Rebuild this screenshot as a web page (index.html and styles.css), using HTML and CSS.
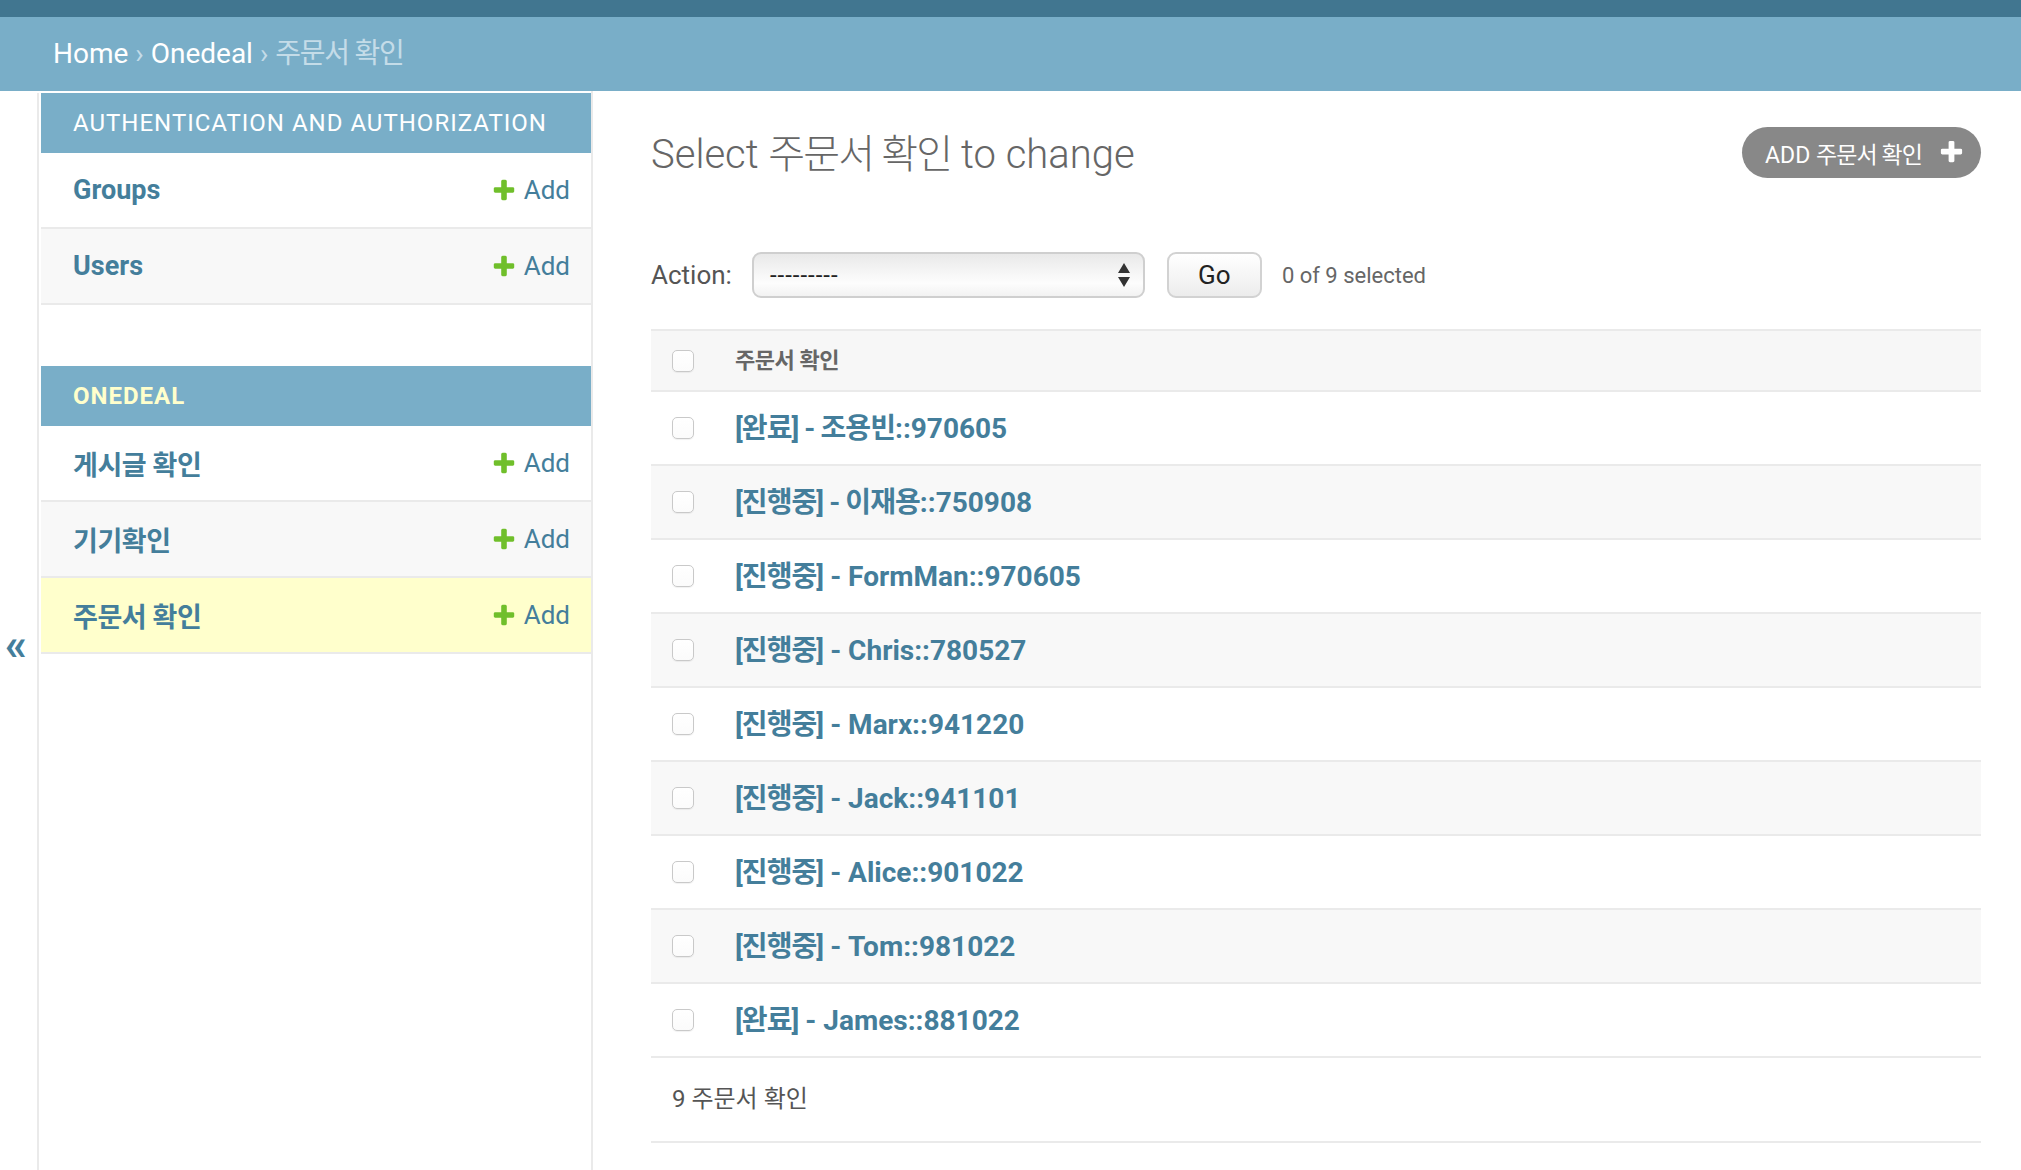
FILE: index.html
```html
<!DOCTYPE html>
<html lang="ko">
<head>
<meta charset="utf-8">
<title>Select 주문서 확인 to change</title>
<link rel="stylesheet" href="styles.css">
</head>
<body>
<div class="topbar"></div>
<nav class="breadcrumbs"><a href="#">Home</a> › <a href="#">Onedeal</a> › <span class="ko">주문서 확인</span></nav>
<div class="main">
  <div class="toggle"><span>«</span></div>
  <aside class="sidebar">
    <div class="module">
      <div class="caption">Authentication and Authorization</div>
      <div class="srow"><a class="model" href="#">Groups</a><a class="addlink" href="#"><svg viewBox="0 0 1792 1792" width="26" height="26"><path fill="#70bf2b" d="M1600 796v192q0 40-28 68t-68 28h-416v416q0 40-28 68t-68 28h-192q-40 0-68-28t-28-68v-416h-416q-40 0-68-28t-28-68v-192q0-40 28-68t68-28h416v-416q0-40 28-68t68-28h192q40 0 68 28t28 68v416h416q40 0 68 28t28 68z"/></svg>Add</a></div>
      <div class="srow alt"><a class="model" href="#">Users</a><a class="addlink" href="#"><svg viewBox="0 0 1792 1792" width="26" height="26"><path fill="#70bf2b" d="M1600 796v192q0 40-28 68t-68 28h-416v416q0 40-28 68t-68 28h-192q-40 0-68-28t-28-68v-416h-416q-40 0-68-28t-28-68v-192q0-40 28-68t68-28h416v-416q0-40 28-68t68-28h192q40 0 68 28t28 68v416h416q40 0 68 28t28 68z"/></svg>Add</a></div>
    </div>
    <div class="module">
      <div class="caption current">Onedeal</div>
      <div class="srow"><a class="model ko" href="#">게시글 확인</a><a class="addlink" href="#"><svg viewBox="0 0 1792 1792" width="26" height="26"><path fill="#70bf2b" d="M1600 796v192q0 40-28 68t-68 28h-416v416q0 40-28 68t-68 28h-192q-40 0-68-28t-28-68v-416h-416q-40 0-68-28t-28-68v-192q0-40 28-68t68-28h416v-416q0-40 28-68t68-28h192q40 0 68 28t28 68v416h416q40 0 68 28t28 68z"/></svg>Add</a></div>
      <div class="srow alt"><a class="model ko" href="#">기기확인</a><a class="addlink" href="#"><svg viewBox="0 0 1792 1792" width="26" height="26"><path fill="#70bf2b" d="M1600 796v192q0 40-28 68t-68 28h-416v416q0 40-28 68t-68 28h-192q-40 0-68-28t-28-68v-416h-416q-40 0-68-28t-28-68v-192q0-40 28-68t68-28h416v-416q0-40 28-68t68-28h192q40 0 68 28t28 68v416h416q40 0 68 28t28 68z"/></svg>Add</a></div>
      <div class="srow selected"><a class="model ko" href="#">주문서 확인</a><a class="addlink" href="#"><svg viewBox="0 0 1792 1792" width="26" height="26"><path fill="#70bf2b" d="M1600 796v192q0 40-28 68t-68 28h-416v416q0 40-28 68t-68 28h-192q-40 0-68-28t-28-68v-416h-416q-40 0-68-28t-28-68v-192q0-40 28-68t68-28h416v-416q0-40 28-68t68-28h192q40 0 68 28t28 68v416h416q40 0 68 28t28 68z"/></svg>Add</a></div>
    </div>
  </aside>
  <div class="content">
    <div class="titlebar">
      <h1>Select <span class="ko">주문서 확인</span> to change</h1>
      <a class="addbtn" href="#"><span class="btntext">Add <span class="ko">주문서 확인</span></span><svg viewBox="0 0 1792 1792" width="27" height="27"><path fill="#fff" d="M1600 736v192q0 40-28 68t-68 28h-416v416q0 40-28 68t-68 28h-192q-40 0-68-28t-28-68v-416h-416q-40 0-68-28t-28-68v-192q0-40 28-68t68-28h416v-416q0-40 28-68t68-28h192q40 0 68 28t28 68v416h416q40 0 68 28t28 68z"/></svg></a>
    </div>
    <div class="actions">
      <span class="label">Action:</span>
      <div class="select"><span>---------</span><svg width="14" height="26" viewBox="0 0 14 26"><path d="M7 1 L13 11 L1 11 Z M1 15 L13 15 L7 25 Z" fill="#333"/></svg></div>
      <button class="go">Go</button>
      <span class="counter">0 of 9 selected</span>
    </div>
    <table class="results">
      <thead><tr><th class="cb"><span class="box"></span></th><th class="name"><span class="ko">주문서 확인</span></th></tr></thead>
      <tbody>
        <tr><td class="cb"><span class="box"></span></td><td class="name"><a href="#"><span class="ko">[완료] - 조용빈</span>::970605</a></td></tr>
        <tr class="alt"><td class="cb"><span class="box"></span></td><td class="name"><a href="#"><span class="ko">[진행중] - 이재용</span>::750908</a></td></tr>
        <tr><td class="cb"><span class="box"></span></td><td class="name"><a href="#"><span class="ko">[진행중]</span> - FormMan::970605</a></td></tr>
        <tr class="alt"><td class="cb"><span class="box"></span></td><td class="name"><a href="#"><span class="ko">[진행중]</span> - Chris::780527</a></td></tr>
        <tr><td class="cb"><span class="box"></span></td><td class="name"><a href="#"><span class="ko">[진행중]</span> - Marx::941220</a></td></tr>
        <tr class="alt"><td class="cb"><span class="box"></span></td><td class="name"><a href="#"><span class="ko">[진행중]</span> - Jack::941101</a></td></tr>
        <tr><td class="cb"><span class="box"></span></td><td class="name"><a href="#"><span class="ko">[진행중]</span> - Alice::901022</a></td></tr>
        <tr class="alt"><td class="cb"><span class="box"></span></td><td class="name"><a href="#"><span class="ko">[진행중]</span> - Tom::981022</a></td></tr>
        <tr><td class="cb"><span class="box"></span></td><td class="name"><a href="#"><span class="ko">[완료]</span> - James::881022</a></td></tr>
      </tbody>
    </table>
    <p class="paginator">9 주문서 확인</p>
  </div>
</div>
</body>
</html>
```

FILE: styles.css
```css
* { box-sizing: border-box; }
html, body { margin: 0; padding: 0; background: #fff; }
body {
  font-family: "Roboto", "Noto Sans CJK KR", "Liberation Sans", sans-serif;
  color: #333;
  font-size: 26px;
}
a { text-decoration: none; }

.topbar { height: 17px; background: #417690; }

.breadcrumbs {
  background: #79aec8;
  color: #c4dce8;
  font-size: 28px;
  line-height: 34px;
  padding: 20px 53px;
}
.breadcrumbs a { color: #fff; }
.breadcrumbs .ko { letter-spacing: -0.045em; }

.main {
  display: flex;
  min-height: 1079px;
}

.toggle {
  width: 39px;
  flex: 0 0 39px;
  border-right: 2px solid #eaeaea;
  margin-top: 2px;
  color: #447e9b;
  font-size: 44px;
  font-weight: 700;
  line-height: 48px;
  padding: 528px 5px 0 0;
  text-align: center;
}

.sidebar {
  flex: 0 0 554px;
  width: 554px;
  padding-left: 2px;
  padding-top: 2px;
  border-right: 2px solid #eaeaea;
}
.module { margin-bottom: 61px; }
.caption {
  height: 60px;
  line-height: 60px;
  background: #79aec8;
  color: #fff;
  text-transform: uppercase;
  font-size: 24px;
  letter-spacing: 1px;
  padding: 0 32px;
}
.caption.current { color: #ffc; font-weight: 700; }

.srow {
  height: 76px;
  border-bottom: 2px solid #eaeaea;
  display: flex;
  align-items: center;
  justify-content: space-between;
  padding: 0 21px 0 32px;
  background: #fff;
}
.srow.alt { background: #f8f8f8; }
.srow.selected { background: #ffc; }
.srow .model { color: #447e9b; font-weight: 700; font-size: 27px; }
.srow .ko { letter-spacing: -0.015em; }
.addlink {
  display: flex;
  align-items: center;
  color: #447e9b;
  font-size: 26px;
}
.addlink svg { margin-right: 7px; }

.content {
  flex: 1;
  padding: 40px 40px 0 58px;
}

.titlebar {
  display: flex;
  justify-content: space-between;
  align-items: flex-start;
}
h1 {
  margin: 0;
  font-size: 40px;
  line-height: 48px;
  font-weight: 300;
  color: #666;
}
h1 .ko { letter-spacing: -0.045em; }
.addbtn {
  margin-top: -4px;
  height: 51px;
  border-radius: 26px;
  background: #888;
  color: #fff;
  display: flex;
  align-items: center;
  padding: 0 16px 0 23px;
  font-size: 23px;
  letter-spacing: 0;
  text-transform: uppercase;
}
.addbtn .ko { letter-spacing: -0.04em; }
.addbtn svg { margin-left: 16px; }

.actions {
  display: flex;
  align-items: center;
  margin-top: 73px;
  height: 46px;
}
.actions .label { color: #555; font-size: 26px; margin-right: 20px; }
.select {
  width: 393px;
  height: 46px;
  border: 2px solid #cfcfcf;
  border-radius: 9px;
  background: linear-gradient(#e9e9e9, #f6f6f6 45%, #fdfdfd 70%, #f2f2f2);
  display: flex;
  align-items: center;
  justify-content: space-between;
  padding: 0 12px 0 16px;
  font-size: 24px;
  letter-spacing: 1px;
  color: #222;
}
.go {
  margin-left: 22px;
  width: 95px;
  height: 46px;
  border: 2px solid #d2d2d2;
  border-radius: 9px;
  background: linear-gradient(#ffffff, #f4f4f4 60%, #ececec);
  font-family: "Roboto", sans-serif;
  font-size: 26px;
  color: #222;
  padding: 0;
}
.counter { margin-left: 20px; font-size: 22px; color: #666; }

.results {
  margin-top: 31px;
  width: 100%;
  border-collapse: collapse;
}
.results thead th {
  background: #f7f7f7;
  border-top: 2px solid #eaeaea;
  border-bottom: 2px solid #eaeaea;
  height: 61px;
  text-align: left;
  font-size: 22px;
  font-weight: 700;
  color: #666;
  padding: 0;
}
.results thead th.name { padding-bottom: 6px; }
.results thead .ko { letter-spacing: -0.02em; }
.results td {
  height: 74px;
  border-bottom: 2px solid #eaeaea;
  padding: 0;
}
.results td.name { padding-bottom: 4px; }
.results td .ko { letter-spacing: -0.033em; }
.results tr.alt td { background: #f8f8f8; }
.results .cb { width: 63px; padding-left: 21px; }
.results .name { padding-left: 21px; }
.results .name a { color: #447e9b; font-weight: 700; font-size: 28px; }
.box {
  display: block;
  width: 22px;
  height: 22px;
  border: 1px solid #c9c9c9;
  border-radius: 5px;
  background: linear-gradient(#fff, #fbfbfb);
  box-shadow: 0 1px 1px rgba(0,0,0,0.06);
}

.paginator {
  margin: 0;
  height: 85px;
  line-height: 83px;
  border-bottom: 2px solid #eaeaea;
  padding-left: 21px;
  font-size: 24px;
  color: #555;
}
```
